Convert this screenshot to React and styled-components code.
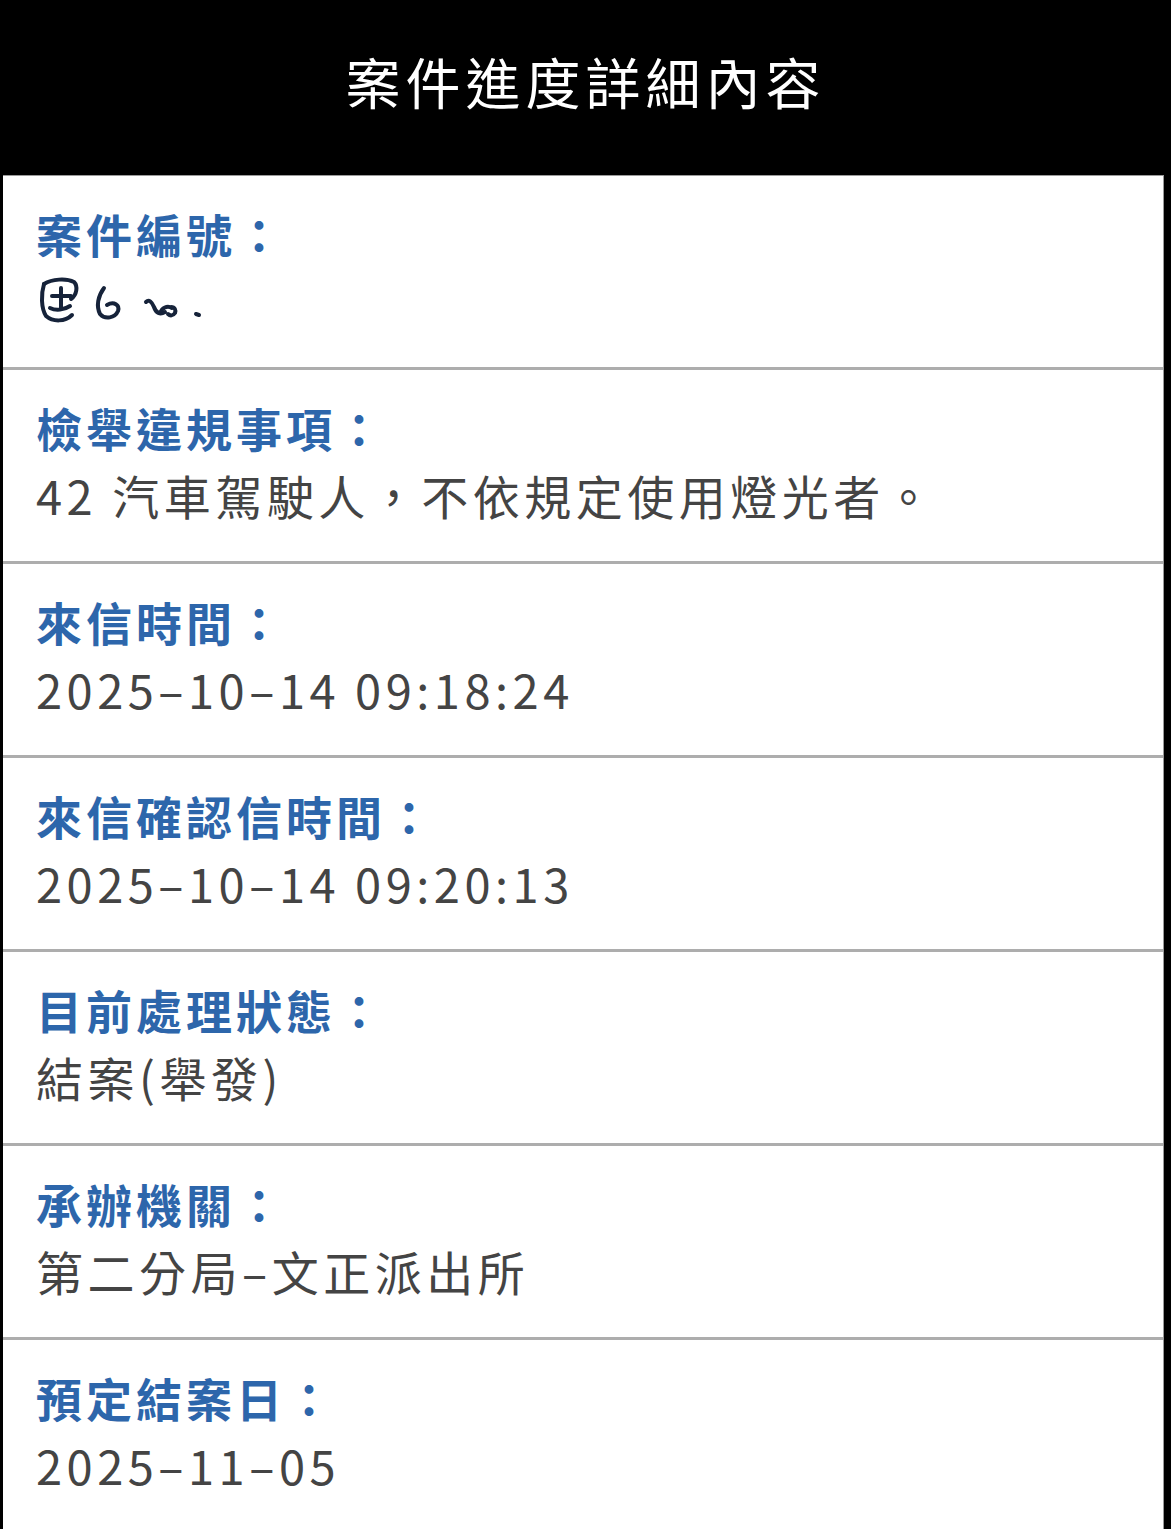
import styled, { createGlobalStyle } from "styled-components";

const GlobalStyle = createGlobalStyle`
  html, body {
    margin: 0;
    padding: 0;
    background: #000;
  }
  body {
    font-family: "Noto Sans CJK TC", "Noto Sans", sans-serif;
  }
`;

const rows = [
  { label: "檢舉違規事項：", value: "42 汽車駕駛人，不依規定使用燈光者。" },
  { label: "來信時間：", value: "2025–10–14 09:18:24" },
  { label: "來信確認信時間：", value: "2025–10–14 09:20:13" },
  { label: "目前處理狀態：", value: "結案(舉發)" },
  { label: "承辦機關：", value: "第二分局–文正派出所" },
  { label: "預定結案日：", value: "2025–11–05" },
];

// hand-scrawled case number, kept unreadable
const CaseScribble = () => (
  <svg width="175" height="54" viewBox="0 0 175 54" fill="none">
    <g stroke="#16233a" strokeWidth="4" strokeLinecap="round" strokeLinejoin="round">
      <path d="M6 10c8-5 22-6 30-2 4 4 3 13-3 17" />
      <path d="M6 10c-3 10-3 24 2 32 7 6 19 6 26-1" />
      <path d="M14 22h19M23 14v20M12 34c6 3 14 2 20-2" />
      <path d="M66 14c-6 8-8 18-4 26 5 6 15 4 18-3 2-6-4-10-11-6" />
      <path d="M108 28c3-3 6 0 8 5 2 6 6 8 11 5" />
      <path d="M122 39c2-5 7-8 12-5M133 33c4 0 5 3 4 6-2 3-5 3-7 1" />
      <path d="M158 40l3 1" />
    </g>
  </svg>
);

export default function App() {
  return (
    <Page>
      <GlobalStyle />
      <Header>
        <Title>案件進度詳細內容</Title>
      </Header>
      <Panel>
        <Row>
          <Label>案件編號：</Label>
          <Scrawl>
            <CaseScribble />
          </Scrawl>
        </Row>
        {rows.map((r) => (
          <Row key={r.label}>
            <Label>{r.label}</Label>
            <Value>{r.value}</Value>
          </Row>
        ))}
      </Panel>
    </Page>
  );
}

const Page = styled.div`
  width: 1171px;
  min-height: 1529px;
  background: #000;
  display: flex;
  flex-direction: column;
`;

const Header = styled.header`
  height: 175px;
  display: flex;
  align-items: center;
  justify-content: center;
`;

const Title = styled.h1`
  margin: 0 0 16px 0;
  color: #fff;
  font-size: 55px;
  font-weight: 400;
  letter-spacing: 5px;
`;

const Panel = styled.main`
  margin: 0 7px 0 3px;
  background: #fff;
  border-top: 1px solid #9a9a9a;
  border-right: 1px solid #9a9a9a;
  flex: 1;
`;

const Row = styled.section`
  padding: 24px 0 0 33px;
  height: 194px;
  box-sizing: border-box;
  border-bottom: 3px solid #adadad;

  &:last-child {
    border-bottom: none;
  }
`;

const Label = styled.div`
  color: #2d66ab;
  font-size: 46px;
  font-weight: 700;
  line-height: 66px;
  letter-spacing: 4px;
`;

const Value = styled.div`
  color: #444;
  font-size: 47px;
  font-weight: 400;
  line-height: 70px;
  letter-spacing: 4.5px;
`;

const Scrawl = styled.div`
  height: 70px;
  display: flex;
  align-items: center;
  margin-left: 2px;
`;
